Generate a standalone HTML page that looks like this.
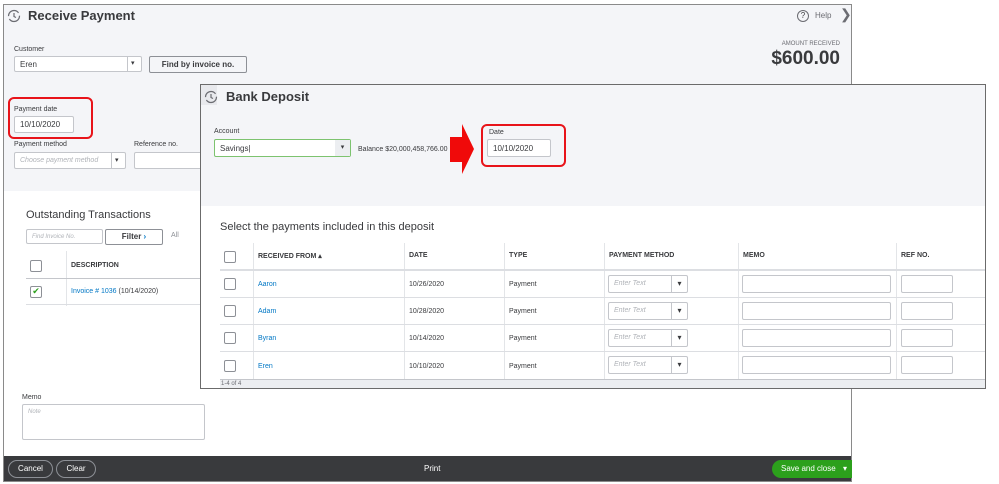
<!DOCTYPE html>
<html><head><meta charset="utf-8"><style>
*{box-sizing:border-box;margin:0;padding:0}
body{width:999px;height:484px;background:#fff;font-family:"Liberation Sans",sans-serif;color:#393a3d;position:relative;overflow:hidden}
.a{position:absolute}
.inp{position:absolute;background:#fff;border:1px solid #c4c6cb;border-radius:2px;font-size:8px;padding-left:5px;display:flex;align-items:center}
.lbl{position:absolute;font-size:7px;color:#393a3d}
.cb{position:absolute;width:12px;height:12px;border:1px solid #8d9096;border-radius:2px;background:#fff}
.th{position:absolute;font-size:7px;font-weight:bold;color:#393a3d}
.td{position:absolute;font-size:7px;color:#393a3d}
.lk{color:#0077c5}
.vl{position:absolute;width:1px;background:#e3e5e8}
.hl{position:absolute;height:1px;background:#dcdee2}
.pm{position:absolute;width:80px;height:18px;border:1px solid #c4c6cb;border-radius:2px;background:#fff;font-size:7px;color:#b0b3b8;font-style:italic;padding:4px 0 0 5px}
.pm:after{content:"▾";position:absolute;right:0;top:0;width:15px;height:16px;border-left:1px solid #c4c6cb;color:#393a3d;font-style:normal;text-align:center;line-height:16px;font-size:8px}
.mm{position:absolute;width:149px;height:18px;border:1px solid #c4c6cb;border-radius:2px;background:#fff}
.rf{position:absolute;width:52px;height:18px;border:1px solid #c4c6cb;border-radius:2px;background:#fff}
</style></head><body>
<!-- Receive Payment window -->
<div class="a" style="left:3px;top:4px;width:849px;height:478px;border:1px solid #8a8a8a;background:#fff"></div>
<div class="a" style="left:4px;top:5px;width:847px;height:186px;background:#f4f5f8"></div>
<svg class="a" style="left:7px;top:9px" width="14" height="14" viewBox="0 0 14 14"><circle cx="7" cy="7" r="5.5" fill="none" stroke="#6b6c72" stroke-width="1.2" stroke-dasharray="14 3"/><path d="M7 4v3.5l2 1" fill="none" stroke="#6b6c72" stroke-width="1.2"/></svg>
<div class="a" style="left:28px;top:8px;font-size:13px;font-weight:bold">Receive Payment</div>
<div class="a" style="left:797px;top:10px;width:12px;height:12px;border:1px solid #6b6c72;border-radius:50%;font-size:8px;text-align:center;line-height:10px">?</div>
<div class="a" style="left:815px;top:11px;font-size:8px;color:#6b6c72">Help</div>
<div class="a" style="left:840px;top:6px;font-size:14px;color:#6b6c72">&#x276F;</div>
<div class="a" style="left:770px;top:41px;width:70px;text-align:right;font-size:6px;color:#6b6c72">AMOUNT RECEIVED</div>
<div class="a" style="left:740px;top:48px;width:100px;text-align:right;font-size:19px;font-weight:bold">$600.00</div>
<div class="lbl" style="left:14px;top:46px">Customer</div>
<div class="inp" style="left:14px;top:56px;width:128px;height:16px">Eren</div>
<div class="a" style="left:127px;top:57px;width:1px;height:14px;background:#c4c6cb"></div>
<div class="a" style="left:131px;top:59px;font-size:7px">▾</div>
<div class="a" style="left:149px;top:56px;width:98px;height:17px;border:1px solid #8d9096;border-radius:2px;background:#f4f5f8;font-size:8px;font-weight:bold;text-align:center;line-height:15px">Find by invoice no.</div>
<div class="a" style="left:8px;top:97px;width:85px;height:42px;border:2px solid #e8141a;border-radius:6px"></div>
<div class="lbl" style="left:14px;top:106px">Payment date</div>
<div class="inp" style="left:14px;top:116px;width:60px;height:17px">10/10/2020</div>
<div class="lbl" style="left:14px;top:141px">Payment method</div>
<div class="inp" style="left:14px;top:152px;width:112px;height:17px;color:#b0b3b8;font-style:italic;font-size:7px">Choose payment method</div>
<div class="a" style="left:111px;top:153px;width:1px;height:15px;background:#c4c6cb"></div>
<div class="a" style="left:115px;top:156px;font-size:7px">▾</div>
<div class="lbl" style="left:134px;top:141px">Reference no.</div>
<div class="inp" style="left:134px;top:152px;width:70px;height:17px"></div>
<div class="a" style="left:26px;top:209px;font-size:11px">Outstanding Transactions</div>
<div class="inp" style="left:26px;top:229px;width:77px;height:15px;color:#b0b3b8;font-style:italic;font-size:6px">Find Invoice No.</div>
<div class="a" style="left:105px;top:229px;width:58px;height:16px;border:1px solid #8d9096;border-radius:2px;font-size:8px;font-weight:bold;text-align:center;line-height:14px">Filter <span style="color:#0077c5">›</span></div>
<div class="a" style="left:171px;top:232px;font-size:7px;color:#8d9096">All</div>
<div class="vl" style="left:66px;top:251px;height:55px"></div>
<div class="cb" style="left:30px;top:260px"></div>
<div class="th" style="left:71px;top:262px">DESCRIPTION</div>
<div class="hl" style="left:26px;top:278px;width:174px;background:#c4c6cb"></div>
<div class="cb" style="left:30px;top:286px;color:#2ca01c;font-size:9px;line-height:9px;text-align:center">✔</div>
<div class="td" style="left:71px;top:288px"><span class="lk">Invoice # 1036</span> (10/14/2020)</div>
<div class="hl" style="left:26px;top:304px;width:174px"></div>
<div class="lbl" style="left:22px;top:394px">Memo</div>
<div class="a" style="left:22px;top:404px;width:183px;height:36px;border:1px solid #c4c6cb;border-radius:2px;font-size:6px;color:#b0b3b8;font-style:italic;padding:4px 5px">Note</div>
<!-- footer -->
<div class="a" style="left:4px;top:456px;width:847px;height:25px;background:#393a3d"></div>
<div class="a" style="left:8px;top:460px;width:45px;height:18px;border:1px solid #8d9096;border-radius:10px;color:#fff;font-size:8px;text-align:center;line-height:16px">Cancel</div>
<div class="a" style="left:56px;top:460px;width:40px;height:18px;border:1px solid #8d9096;border-radius:10px;color:#fff;font-size:8px;text-align:center;line-height:16px">Clear</div>
<div class="a" style="left:424px;top:464px;color:#fff;font-size:8px">Print</div>
<div class="a" style="left:772px;top:460px;width:80px;height:18px;background:#2ca01c;border-radius:10px 0 0 10px;color:#fff;font-size:8px;line-height:18px;padding-left:9px">Save and close <span style="margin-left:5px">▾</span></div>
<!-- Bank deposit -->
<div class="a" style="left:200px;top:84px;width:786px;height:305px;border:1px solid #6b6b6b;background:#fff"></div>
<div class="a" style="left:201px;top:85px;width:784px;height:121px;background:#f4f5f8"></div>
<div class="a" style="left:201px;top:85px;width:16px;height:20px;background:#e8e9ed"></div>
<svg class="a" style="left:204px;top:90px" width="14" height="14" viewBox="0 0 14 14"><circle cx="7" cy="7" r="5.5" fill="none" stroke="#6b6c72" stroke-width="1.2" stroke-dasharray="14 3"/><path d="M7 4v3.5l2 1" fill="none" stroke="#6b6c72" stroke-width="1.2"/></svg>
<div class="a" style="left:226px;top:89px;font-size:13px;font-weight:bold">Bank Deposit</div>
<div class="lbl" style="left:214px;top:128px">Account</div>
<div class="inp" style="left:214px;top:139px;width:137px;height:18px;border-color:#7dc36f">Savings|</div>
<div class="a" style="left:335px;top:140px;width:15px;height:16px;background:#eceef1;font-size:7px;text-align:center;line-height:16px">▾</div>
<div class="a" style="left:358px;top:146px;font-size:7px;width:92px;overflow:hidden;white-space:nowrap">Balance $20,000,458,766.00</div>
<svg class="a" style="left:448px;top:122px" width="28" height="54"><polygon points="2,15 14,15 14,2 26,27 14,52 14,40 2,40" fill="#f00a0a"/></svg>
<div class="a" style="left:481px;top:124px;width:85px;height:43px;border:2px solid #e8141a;border-radius:6px"></div>
<div class="lbl" style="left:489px;top:129px">Date</div>
<div class="inp" style="left:487px;top:139px;width:64px;height:18px">10/10/2020</div>
<div class="a" style="left:220px;top:221px;font-size:11px">Select the payments included in this deposit</div>
<div class="vl" style="left:253px;top:243px;height:137px"></div>
<div class="vl" style="left:404px;top:243px;height:137px"></div>
<div class="vl" style="left:504px;top:243px;height:137px"></div>
<div class="vl" style="left:604px;top:243px;height:137px"></div>
<div class="vl" style="left:738px;top:243px;height:137px"></div>
<div class="vl" style="left:896px;top:243px;height:137px"></div>
<div class="cb" style="left:224px;top:251px"></div>
<div class="th" style="left:258px;top:252px">RECEIVED FROM ▴</div>
<div class="th" style="left:409px;top:252px">DATE</div>
<div class="th" style="left:509px;top:252px">TYPE</div>
<div class="th" style="left:609px;top:252px">PAYMENT METHOD</div>
<div class="th" style="left:743px;top:252px">MEMO</div>
<div class="th" style="left:901px;top:252px">REF NO.</div>
<div class="hl" style="left:220px;top:269px;width:765px;height:2px"></div>

<div class="cb" style="left:224px;top:278px"></div><div class="td lk" style="left:258px;top:281px">Aaron</div><div class="td" style="left:409px;top:281px">10/26/2020</div><div class="td" style="left:509px;top:281px">Payment</div><div class="pm" style="left:608px;top:275px">Enter Text</div><div class="mm" style="left:742px;top:275px"></div><div class="rf" style="left:901px;top:275px"></div>
<div class="hl" style="left:220px;top:297px;width:765px"></div>
<div class="cb" style="left:224px;top:305px"></div><div class="td lk" style="left:258px;top:308px">Adam</div><div class="td" style="left:409px;top:308px">10/28/2020</div><div class="td" style="left:509px;top:308px">Payment</div><div class="pm" style="left:608px;top:302px">Enter Text</div><div class="mm" style="left:742px;top:302px"></div><div class="rf" style="left:901px;top:302px"></div>
<div class="hl" style="left:220px;top:324px;width:765px"></div>
<div class="cb" style="left:224px;top:332px"></div><div class="td lk" style="left:258px;top:335px">Byran</div><div class="td" style="left:409px;top:335px">10/14/2020</div><div class="td" style="left:509px;top:335px">Payment</div><div class="pm" style="left:608px;top:329px">Enter Text</div><div class="mm" style="left:742px;top:329px"></div><div class="rf" style="left:901px;top:329px"></div>
<div class="hl" style="left:220px;top:351px;width:765px"></div>
<div class="cb" style="left:224px;top:360px"></div><div class="td lk" style="left:258px;top:363px">Eren</div><div class="td" style="left:409px;top:363px">10/10/2020</div><div class="td" style="left:509px;top:363px">Payment</div><div class="pm" style="left:608px;top:356px">Enter Text</div><div class="mm" style="left:742px;top:356px"></div><div class="rf" style="left:901px;top:356px"></div>
<div class="a" style="left:220px;top:379px;width:765px;height:9px;background:#eceef1;border-top:1px solid #c4c6cb"></div>
<div class="a" style="left:221px;top:381px;font-size:6px;color:#6b6c72">1-4 of 4</div>
</body></html>
